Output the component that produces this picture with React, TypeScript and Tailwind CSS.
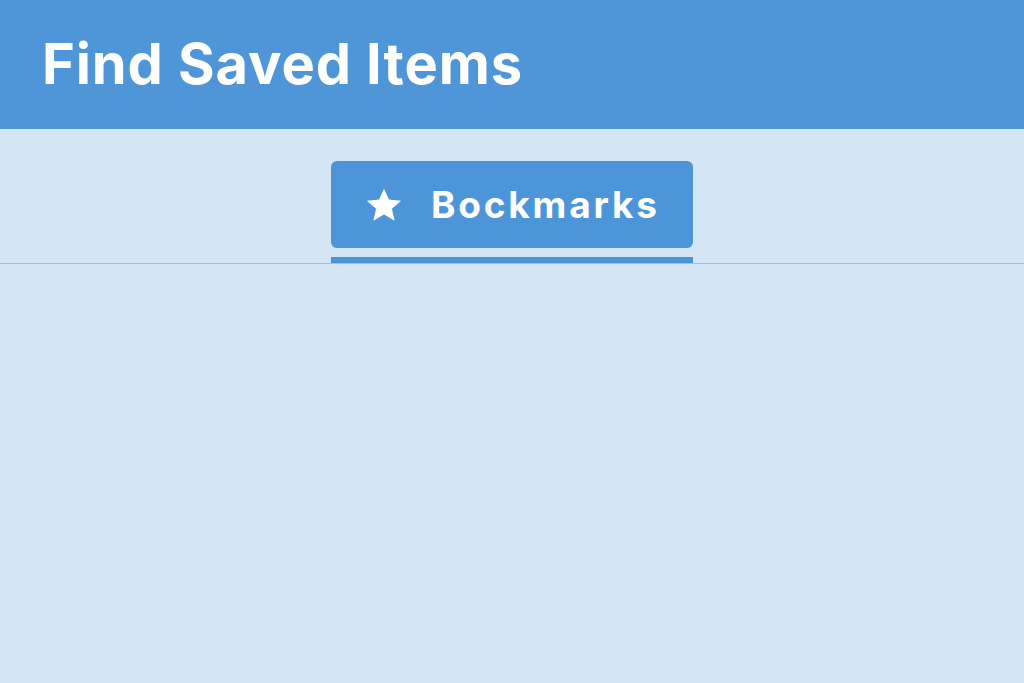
export default function App() {
  return (
    <div
      className="flex h-[683px] w-[1024px] flex-col bg-[#d4e5f5]"
      style={{ fontFamily: "Inter, 'Noto Sans', sans-serif" }}
    >
      <header className="flex h-[129px] items-center bg-[#4f96d9] px-[42px] pb-[2px]">
        <h1 className="text-[56px] font-bold leading-none tracking-[0.9px] text-white">
          Find Saved Items
        </h1>
      </header>

      <div className="flex justify-center border-b border-[#98c0ea] pt-[32px]">
        <div className="flex w-[362px] flex-col">
          <button className="flex h-[87px] items-center rounded-md bg-[#4d95d9] pl-[34px] text-white">
            <svg width="38" height="38" viewBox="0 0 24 24" fill="white">
              <polygon points="12,1.5 15.1,8.6 22.8,9.3 17,14.4 18.7,22 12,18 5.3,22 7,14.4 1.2,9.3 8.9,8.6" />
            </svg>
            <span className="ml-[28px] text-[37px] font-bold leading-none tracking-[2.8px]">
              Bockmarks
            </span>
          </button>
          <div className="mt-[9px] h-[6px] bg-[#4d95d9]" />
        </div>
      </div>
    </div>
  );
}
